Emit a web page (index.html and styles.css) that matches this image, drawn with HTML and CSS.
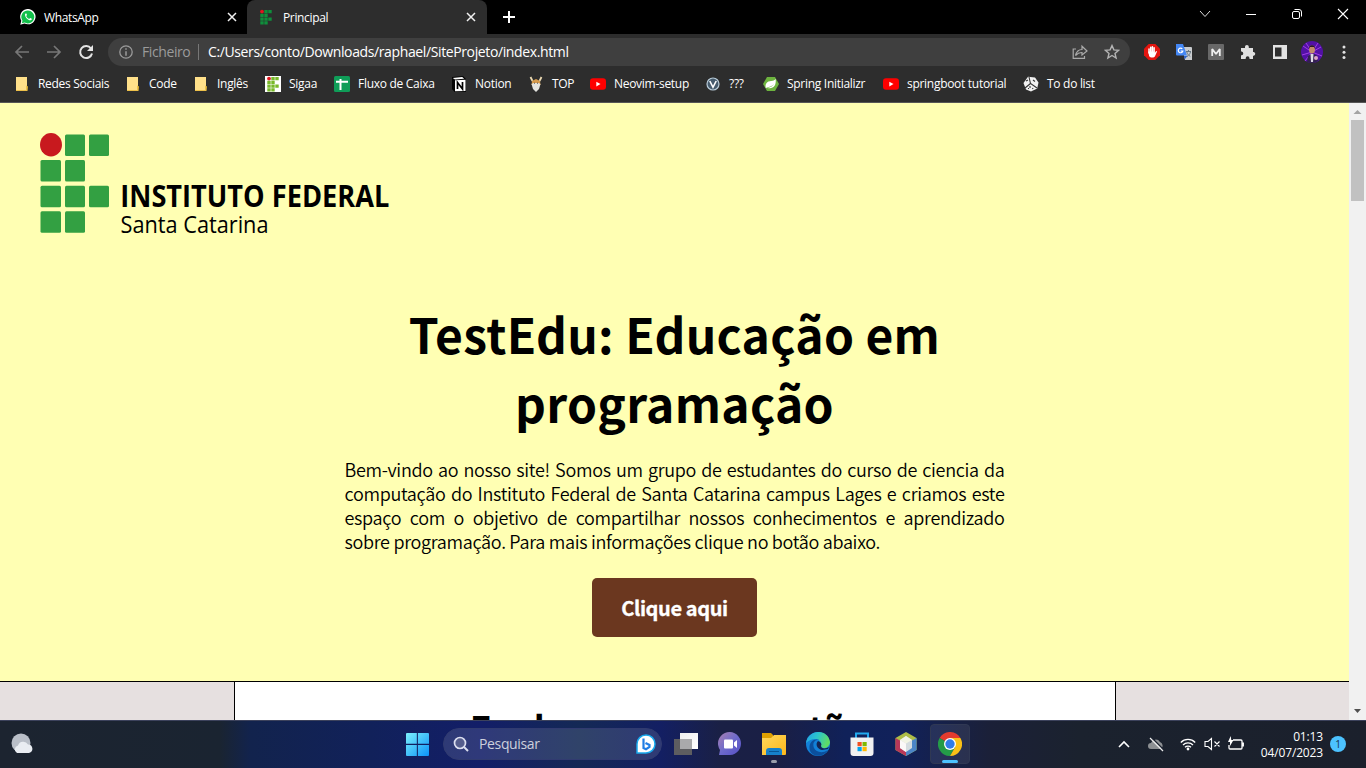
FILE: index.html
```html
<!DOCTYPE html>
<html lang="pt">
<head>
<meta charset="utf-8">
<title>Principal</title>
<link rel="stylesheet" href="styles.css">
</head>
<body>
<svg class="defs" width="0" height="0">
  <symbol id="folder" viewBox="0 0 16 16"><path d="M2 1h11v14H2z" fill="#ffe08a"/><path d="M12.2 9.5V15h1.3l.5-4.500z" fill="#e8b93c"/><path d="M2 14.500h10.500" stroke="#edc04a"/></symbol>
  <symbol id="iflogo" viewBox="0 0 16 16"><circle cx="4" cy="2.600" r="1.900" fill="#e0161e"/><path d="M6.300 1h3.400v3.200H6.300zM10.300 1h3.400v3.200h-3.400zM2.300 4.800h3.400V8H2.300zM6.300 4.800h3.400V8H6.300zM2.300 8.500h3.400v3.200H2.300zM6.300 8.500h3.400v3.200H6.300zM10.300 8.500h3.400v3.200h-3.400zM2.300 12.200h3.400v3.200H2.300zM6.300 12.200h3.400v3.200H6.300z" fill="currentColor"/></symbol>
  <symbol id="youtube" viewBox="0 0 16 16"><rect y="2.300" width="16" height="11.500" rx="3" fill="#f00"/><path d="M6.300 5.700v4.700L10.500 8z" fill="#fff"/></symbol>
  <symbol id="close" viewBox="0 0 10 10"><path d="M1 1l8 8M9 1L1 9" stroke="#f1f1f1" stroke-width="1.500"/></symbol>
</svg>
<div class="screen">
  <header class="browser">
    <div class="tabs">
      <div class="tab">
        <svg class="i16" viewBox="0 0 16 16"><path d="M.3 15.700l1-4A7.700 7.700 0 1 1 4.500 14.600z" fill="#fff"/><path d="M1.800 14.300l.7-2.600A6.500 6.500 0 1 1 4.600 13.600z" fill="#12c04b"/><path d="M5.500 4.500c-2 2 2.500 7.500 5.300 6.800 1.500-.5 1.100-1.400.6-1.700l-1.200-.5-1.100 1C8.300 9.900 6.600 8.300 6.200 7.100l.8-1-.6-1.700z" fill="#fff"/></svg>
        <span class="tab-name">WhatsApp</span>
        <svg class="tab-x"><use href="#close"/></svg>
      </div>
      <div class="tab tab-on">
        <svg class="i16 if-dark"><use href="#iflogo"/></svg>
        <span class="tab-name">Principal</span>
        <svg class="tab-x"><use href="#close"/></svg>
      </div>
      <svg class="plus" viewBox="0 0 12 12"><path d="M6 0v12M0 6h12" stroke="#fff" stroke-width="2"/></svg>
      <div class="win">
        <svg viewBox="0 0 12 12"><path d="M1 3l5 5.500L11 3" fill="none" stroke="#ddd"/></svg>
        <svg viewBox="0 0 12 12"><path d="M1 6.500h10" stroke="#fff"/></svg>
        <svg viewBox="0 0 12 12"><g fill="none" stroke="#fff"><rect x="1.500" y="3.500" width="7" height="7" rx="1.500"/><path d="M3.500 1.500H8a2.500 2.500 0 0 1 2.500 2.500v4.500"/></g></svg>
        <svg viewBox="0 0 12 12"><path d="M1 1l10 10M11 1L1 11" stroke="#fff" stroke-width="1.100"/></svg>
      </div>
    </div>
    <div class="toolbar">
      <svg class="nav" viewBox="0 0 16 16"><path d="M15 8H2M8 2L2 8l6 6" fill="none" stroke="#777" stroke-width="1.700"/></svg>
      <svg class="nav" viewBox="0 0 16 16"><path d="M1 8h13M8 2l6 6-6 6" fill="none" stroke="#777" stroke-width="1.700"/></svg>
      <svg class="nav" viewBox="0 0 16 16"><path d="M13 4.500A6 6 0 1 0 14 9.500" fill="none" stroke="#e4e4e4" stroke-width="2"/><path d="M15 1v6H9z" fill="#e4e4e4"/></svg>
      <div class="omnibox">
        <svg class="info" viewBox="0 0 14 14"><circle cx="7" cy="7" r="6.200" fill="none" stroke="#9b9b9b" stroke-width="1.300"/><path d="M7 3.200v1.600M7 6.200v4.600" stroke="#9b9b9b" stroke-width="1.500"/></svg>
        <span class="scheme">Ficheiro</span><i class="bar"></i><span class="url">C:/Users/conto/Downloads/raphael/SiteProjeto/index.html</span>
        <svg class="i16 share" viewBox="0 0 16 16"><g fill="none" stroke="#aaa" stroke-width="1.200"><path d="M4 5H1.200v9.400h11.300V12M3.500 11.500C4.500 7.500 7 5.500 10 5.500V2.200L15 7l-5 4V8.500C7 8.300 5.500 9.300 3.500 11.500z"/></g></svg>
        <svg class="i16" viewBox="0 0 16 16"><path d="M8 1.600l1.900 4.300 4.700.4-3.600 3.100 1.100 4.600L8 11.500 3.900 14 5 9.400 1.400 6.300l4.700-.4z" fill="none" stroke="#b4b4b4" stroke-width="1.400"/></svg>
      </div>
      <div class="ext">
        <svg viewBox="0 0 16 16"><path d="M4.700 0h6.600L16 4.700v6.600L11.300 16H4.700L0 11.300V4.700z" fill="#e3150f"/><path d="M5 9V5M6.700 8V3.300M8.400 8V2.800M10.100 8V3.800" stroke="#fff" stroke-width="1.500" stroke-linecap="round"/><path d="M4.300 7.500h6.500v1.600l1.300-2.200 1 .5-2 4.600c-.8 1.900-4.800 2.200-6-.1z" fill="#fff"/></svg>
        <svg viewBox="0 0 16 16"><path d="M6 3h9a1 1 0 0 1 1 1v12H9z" fill="#c9cccf"/><path d="M0 0h7l4 11.500H1a1 1 0 0 1-1-1z" fill="#4487f4"/><path d="M8 12h3.500L8.500 15.500z" fill="#2d63c8"/><path d="M6.300 4.900A2.300 2.300 0 1 0 6.800 7H4.700" fill="none" stroke="#fff" stroke-width="1.200"/><path d="M10 7.500h5M12.500 6v1.500M14.500 8c-.5 2-2 3.500-3.500 4.500M10.800 8c.5 2 2 3.500 3.500 4.500" stroke="#667681" fill="none"/></svg>
        <svg viewBox="0 0 16 16"><rect width="16" height="16" rx="1" fill="#686868"/><path d="M4.200 12V5L8 10l3.800-5v7" fill="none" stroke="#eee" stroke-width="1.800" stroke-linejoin="bevel"/></svg>
        <svg viewBox="0 0 16 16"><path d="M1 4h4V2.800a1.900 1.900 0 0 1 3.800 0V4H13v4h.8a1.900 1.900 0 0 1 0 3.700H13V15H9.500v-.8a1.900 1.900 0 0 0-3.800 0v.8H1v-3.700h.8a1.900 1.900 0 0 0 0-3.700H1z" fill="#e0e0e0"/></svg>
        <svg viewBox="0 0 16 16"><path d="M1 1h14v14H1z" fill="#e2e2e2"/><path d="M3 3.500h6.500v9H3z" fill="#2d2d2d"/></svg>
        <svg class="avatar" viewBox="0 0 22 22"><circle cx="11" cy="11" r="11" fill="#5211a5"/><g stroke="#a33de8" stroke-width="1"><path d="M11 11L2 5M11 11L5 2M11 11L17 2M11 11l9-5M11 11l10 4M11 11L1 14M11 11l-7 9"/></g><path d="M6 21l1-6 3-2h3l3 2 1 5-4 2H8z" fill="#332150"/><path d="M9.500 13h3l-.5 8h-2z" fill="#dedbe5"/><ellipse cx="11" cy="8.500" rx="3" ry="4" fill="#c18b6a"/><path d="M8 8c-.5-5 6.500-5 6 0l-1-2H9z" fill="#2a172a"/><circle cx="15" cy="17" r="2" fill="#dda5c8"/></svg>
        <svg viewBox="0 0 16 16"><g fill="#e2e2e2"><circle cx="8" cy="3" r="1.500"/><circle cx="8" cy="8.300" r="1.500"/><circle cx="8" cy="13.500" r="1.500"/></g></svg>
      </div>
    </div>
    <nav class="marks">
      <a><svg><use href="#folder"/></svg><span>Redes Sociais</span></a>
      <a><svg><use href="#folder"/></svg><span>Code</span></a>
      <a><svg><use href="#folder"/></svg><span>Inglês</span></a>
      <a><svg class="if-light"><use href="#iflogo"/></svg><span>Sigaa</span></a>
      <a><svg viewBox="0 0 16 16"><rect width="16" height="16" rx="1.500" fill="#0f9d58"/><path d="M2 5.700h12M6.500 3v11" stroke="#fff" stroke-width="2"/></svg><span>Fluxo de Caixa</span></a>
      <a><svg viewBox="0 0 16 16"><path d="M1 1l11-1 3 3v13H3.500L1 13z" fill="#050505"/><path d="M4 4.300l10.500-.6V15L4 15.300z" fill="#fff"/><path d="M1.700 2l9.500-.9 2 1.600L4 3.400z" fill="#fff"/><path d="M6.500 13V6.500l5 6.500V6" fill="none" stroke="#000" stroke-width="1.700"/></svg><span>Notion</span></a>
      <a><svg viewBox="0 0 16 16"><path d="M2.500 1l2 4M13.500 1l-2 4" stroke="#ead9b2" stroke-width="1.800"/><path d="M4 5l4-2 4 2 .5 4h-9z" fill="#d69b4e"/><path d="M3.500 8l2-1h5l2 1-1.500 5L8 16l-3-3z" fill="#e3e3df"/><path d="M6 7.200h.8M9.200 7.200h.8" stroke="#333"/></svg><span>TOP</span></a>
      <a><svg><use href="#youtube"/></svg><span>Neovim-setup</span></a>
      <a><svg viewBox="0 0 16 16"><circle cx="8" cy="8" r="6" fill="#465b6d" stroke="#b8cbd8" stroke-width="1.200"/><path d="M4.800 5L8 11.300 11.200 5" fill="none" stroke="#fff" stroke-width="1.600"/></svg><span>???</span></a>
      <a><svg viewBox="0 0 16 16"><path d="M4 1h8l4 7-4 7H4L0 8z" fill="#6db33f"/><path d="M2.700 12c-1-6 3-7 7-7.300 1.500-.2 2.300-1 3-1.700.7 6.500-2 10-8 9 3-.8 5-2 6.500-4-2.500 2.300-5 3-8.500 4z" fill="#fff"/></svg><span>Spring Initializr</span></a>
      <a><svg><use href="#youtube"/></svg><span>springboot tutorial</span></a>
      <a><svg viewBox="0 0 16 16"><path d="M5 .8l7 .7 3.500 5-1.300 6L8 15.500l-5-2L.5 7z" fill="#f1f1f1"/><path d="M6 1l1.500 6.500L14 12M7.500 7.500L2 12M5 4l-2 1M10 4l2 1.500M7 10v2M5.500 12v1M10 12l-.5 1" fill="none" stroke="#333" stroke-width="1.100"/></svg><span>To do list</span></a>
    </nav>
  </header>
  <div class="viewport">
    <main class="page">
      <section class="hero">
        <svg class="brand" viewBox="0 0 352 104">
          <g fill="#33a042"><rect x="25" y="1.500" width="20" height="21.500" rx="1.500"/><rect x="49" y="1.500" width="20" height="21.500" rx="1.500"/><rect x="0.500" y="27" width="20.500" height="21.500" rx="1.500"/><rect x="25" y="27" width="20" height="21.500" rx="1.500"/><rect x="0.500" y="52.700" width="20.500" height="21.500" rx="1.500"/><rect x="25" y="52.700" width="20" height="21.500" rx="1.500"/><rect x="49" y="52.700" width="20" height="21.500" rx="1.500"/><rect x="0.500" y="78.300" width="20.500" height="21.500" rx="1.500"/><rect x="25" y="78.300" width="20" height="21.500" rx="1.500"/></g>
          <ellipse cx="11" cy="11.700" rx="11" ry="11.700" fill="#c8191e"/>
          <text class="brand-a" x="80.300" y="74" textLength="269" lengthAdjust="spacingAndGlyphs">INSTITUTO FEDERAL</text>
          <text class="brand-b" x="80.500" y="99.500" textLength="148" lengthAdjust="spacingAndGlyphs">Santa Catarina</text>
        </svg>
        <h1>TestEdu: Educação em programação</h1>
        <p>Bem-vindo ao nosso site! Somos um grupo de estudantes do curso de ciencia da computação do Instituto Federal de Santa Catarina campus Lages e criamos este espaço com o objetivo de compartilhar nossos conhecimentos e aprendizado sobre programação. Para mais informações clique no botão abaixo.</p>
        <button>Clique aqui</button>
      </section>
      <section class="next"><h2>Explore novas questões</h2></section>
    </main>
    <div class="scroll">
      <svg viewBox="0 0 17 17"><path d="M4.500 11L8.500 7l4 4z" fill="#a3a3a3"/></svg>
      <i class="thumb"></i>
      <svg class="down" viewBox="0 0 17 17"><path d="M5 6l3.500 4L12 6z" fill="#505050"/></svg>
    </div>
  </div>
  <footer class="taskbar">
    <svg class="weather" viewBox="0 0 24 24"><circle cx="11" cy="11" r="9.500" fill="#b9bfc8"/><path d="M7 21a4 4 0 0 1 1-7.500 5.500 5.500 0 0 1 10-1A4.300 4.300 0 0 1 19 21z" fill="#e9edf2"/></svg>
    <div class="apps">
      <svg class="start" viewBox="0 0 24 24"><defs><linearGradient id="w" x1="0" y1="0" x2="1" y2="1"><stop stop-color="#7cf0fc"/><stop offset="1" stop-color="#0b93f8"/></linearGradient></defs><path d="M0 1a1 1 0 0 1 1-1h10.300v11.300H0zM12.400 0H23a1 1 0 0 1 1 1v10.300H12.400zM0 12.400h11.300V24H1a1 1 0 0 1-1-1zM12.400 12.400H24V23a1 1 0 0 1-1 1H12.400z" fill="url(#w)"/></svg>
      <div class="search">
        <svg class="i16" viewBox="0 0 16 16"><circle cx="7" cy="7" r="5.500" fill="#555d8d" stroke="#dcdff0" stroke-width="1.700"/><path d="M11 11l4 4" stroke="#dcdff0" stroke-width="2"/></svg>
        <span>Pesquisar</span>
        <svg class="bing" viewBox="0 0 20 20"><path d="M1 19V10a9 9 0 1 1 9 9z" fill="#fff" stroke="#18a9ed" stroke-width="1.500"/><path d="M7.500 4.500v9.500l2.500 1.200 3.500-2.200v-2L9.500 9" fill="none" stroke="#217ee5" stroke-width="2.200"/></svg>
      </div>
      <svg class="app" viewBox="0 0 24 24"><defs><linearGradient id="tv" x2="1" y2="1"><stop stop-color="#eee"/><stop offset="1" stop-color="#fff"/></linearGradient></defs><path d="M6 1h18v16H6z" fill="url(#tv)"/><path d="M0 7h18v16H0z" fill="#5d5d60"/><path d="M6 7h12v10H6z" fill="#a9a9ab"/></svg>
      <svg class="app" viewBox="0 0 24 24"><defs><linearGradient id="ch" x2="1" y2="1"><stop stop-color="#a97faf"/><stop offset=".5" stop-color="#6e6bcb"/><stop offset="1" stop-color="#554fc6"/></linearGradient></defs><path d="M1 23l1-5A11.500 11.500 0 1 1 12 23z" fill="url(#ch)"/><rect x="6" y="7.500" width="9" height="9" rx="1" fill="#fff"/><path d="M16 10.500l3-2.500v8l-3-2.500z" fill="#fff"/></svg>
      <div class="app running"><svg viewBox="0 0 24 24"><defs><linearGradient id="fo" x2="1" y2="1"><stop stop-color="#ffd85c"/><stop offset="1" stop-color="#fdb71a"/></linearGradient></defs><path d="M0 1h9l2 2v4H0z" fill="#dfa000"/><path d="M0 6h9l3-3h12v19a1 1 0 0 1-1 1H0z" fill="url(#fo)"/><path d="M4 23v-4a3 3 0 0 1 3-3h10a3 3 0 0 1 3 3v4z" fill="#1681ca"/><path d="M7 19.500h10" stroke="#075695"/></svg></div>
      <svg class="app" viewBox="0 0 24 24"><defs><linearGradient id="ed" x2="1" y2=".3"><stop stop-color="#229fe8"/><stop offset=".5" stop-color="#2bc4cd"/><stop offset="1" stop-color="#5edc66"/></linearGradient></defs><circle cx="12" cy="12" r="12" fill="#1280d8"/><path d="M0 11C2-3 22-4 24 10c0 6-8 8-9 4 2-7-8-10-15-3z" fill="url(#ed)"/><path d="M14 8c-5-1-8 3-6 8 2 4 8 6 14 2-4 7-15 8-18 1-2-7 2-13 10-11z" fill="#0b4f9d"/><path d="M12 9c-3 3-1 8 4 9l6-1 1-2c-3 2-8 2-8-1 1-2 0-4-3-5z" fill="#142553"/></svg>
      <svg class="app" viewBox="0 0 24 24"><path d="M6 6V1.500h12V6" fill="none" stroke="#22a9ee" stroke-width="2"/><path d="M.5 5.500h23V21a3 3 0 0 1-3 3h-17a3 3 0 0 1-3-3z" fill="#f1f1f1"/><path d="M7.500 10h4.200v4.200H7.500z" fill="#f25022"/><path d="M12.500 10h4.200v4.200h-4.200z" fill="#7fba00"/><path d="M7.500 15h4.200v4.200H7.500z" fill="#00a4ef"/><path d="M12.500 15h4.200v4.200h-4.200z" fill="#ffb900"/></svg>
      <svg class="app" viewBox="0 0 24 24"><path d="M12 0l10.500 6v12L12 24 1.500 18V6z" fill="#aebd47"/><path d="M1.500 6L12 12v12L1.500 18z" fill="#b83759"/><path d="M22.500 6L12 12v12l10.500-6z" fill="#4b86c9"/><path d="M12 4l6 4v8l-6 4-6-4V8z" fill="#d5dce0"/><path d="M12 4l6 4-6 3.500L6 8z" fill="#f2f4e4"/><path d="M12 11.500V20l-6-4V8z" fill="#fbf8f8"/></svg>
      <div class="active-app"><svg viewBox="0 0 24 24"><path d="M12 12L1.600 6A12 12 0 0 1 22.400 6z" fill="#e33b2e"/><path d="M12 24A12 12 0 0 1 1.600 6L12 12l5.200 3z" fill="#249b48"/><path d="M17.200 15L12 24A12 12 0 0 0 22.400 6H12z" fill="#fbc116"/><circle cx="12" cy="12" r="6" fill="#fff"/><circle cx="12" cy="12" r="4.700" fill="#317ce9"/></svg></div>
    </div>
    <div class="tray">
      <svg class="t-up" viewBox="0 0 12 12"><path d="M1 9l5-5 5 5" fill="none" stroke="#fff" stroke-width="1.600"/></svg>
      <svg class="t-cloud" viewBox="0 0 16 16"><path d="M3 13a3 3 0 0 1 0-6 5 5 0 0 1 9-1 4 4 0 0 1 1 7z" fill="#8d9093"/><path d="M3.500 1.500l12 12" stroke="#1c2230" stroke-width="1.200"/><path d="M2 2l13 13" stroke="#eee" stroke-width="1.200"/></svg>
      <svg class="t-wifi" viewBox="0 0 16 16"><g fill="none" stroke="#fff" stroke-width="1.300"><path d="M.8 6.500a10 10 0 0 1 14.400 0M3 9a7 7 0 0 1 10 0M5 11.300a4.200 4.200 0 0 1 6 0"/></g><circle cx="8" cy="13" r="1.400" fill="#fff"/></svg>
      <svg class="t-vol" viewBox="0 0 16 16"><path d="M1 5.500h3l3.500-3v11l-3.500-3H1zM10.500 5.500l5 5M15.500 5.500l-5 5" fill="none" stroke="#fff" stroke-width="1.100"/></svg>
      <svg class="t-bat" viewBox="0 0 16 16"><path d="M5 4h8a1 1 0 0 1 1 1v7a1 1 0 0 1-1 1H2a1 1 0 0 1-1-1V9M15.300 6.500v4" fill="none" stroke="#fff" stroke-width="1.300"/><path d="M2.700 0L0 6h2v4l3.500-6H3.300z" fill="#fff"/></svg>
      <div class="clock"><span>01:13</span><span>04/07/2023</span></div>
      <b class="badge">1</b>
    </div>
  </footer>
</div>
</body>
</html>
```
FILE: styles.css
```css
* { box-sizing: border-box; }
body { margin: 0; overflow: hidden; font-family: "Open Sans", "Noto Sans", sans-serif; }
svg { display: block; flex: none; }
.defs { position: absolute; }
.i16 { width: 16px; height: 16px; }
.screen { width: 1366px; height: 768px; display: flex; flex-direction: column; overflow: hidden; }

.browser { height: 103px; background: #2d2d2d; border-bottom: 1px solid #565656; color: #fff; flex: none; }
.tabs { height: 34px; background: #000; display: flex; align-items: center; }
.tab { width: 247px; height: 34px; padding: 0 10px 0 20px; display: flex; align-items: center; gap: 8px; font-size: 12px; }
.tab-on { width: 240px; padding: 0 11px 0 11px; background: #2d2d2d; border-radius: 8px 8px 0 0; }
.tab-on .tab-name { padding-left: 1px; }
.tab-name { flex: 1; letter-spacing: -0.35px; }
.tab-x { width: 10px; height: 10px; }
.if-dark { color: #0f8f3c; }
.plus { width: 12px; height: 12px; margin-left: 16px; }
.win { margin-left: auto; padding-bottom: 6px; padding-right: 17px; display: flex; gap: 34px; }
.win svg { width: 12px; height: 12px; }

.toolbar { height: 36px; display: flex; align-items: center; padding-left: 14px; }
.nav { width: 16px; height: 16px; margin-right: 16px; }
.omnibox { width: 1022px; height: 28px; margin-left: -2px; border-radius: 14px; background: #3f3f3f; display: flex; align-items: center; padding: 0 10px 0 11px; font-size: 14px; }
.info { width: 14px; height: 14px; margin-right: 9px; }
.scheme { width: 56px; color: #9b9b9b; letter-spacing: -0.4px; padding-bottom: 1px; }
.bar { width: 1px; height: 16px; background: #777; margin-right: 9px; }
.url { flex: 1; letter-spacing: -0.38px; white-space: nowrap; padding-bottom: 1px; }
.share { margin-right: 16px; }
.ext { display: flex; align-items: center; gap: 16px; margin-left: 14px; }
.ext svg { width: 16px; height: 16px; }
.ext .avatar { width: 22px; height: 22px; margin: 0 -3px; }

.marks { height: 28px; padding-left: 14px; display: grid; align-items: center; font-size: 12px; letter-spacing: -0.29px; white-space: nowrap;
  grid-template-columns: 111px 68px 72px 69px 117px 77px 62px 115px 58px 120px 140px 100px; }
.marks a { display: flex; align-items: center; gap: 8px; }
.marks svg { width: 16px; height: 16px; }
.marks span { padding-bottom: 1px; }
.marks .if-light { background: #fff; color: #78b82a; }

.viewport { flex: 1; min-height: 0; display: flex; overflow: hidden; }
.page { flex: 1; background: #e6e0e0; font-family: "Noto Sans CJK JP", sans-serif; color: #000; overflow: hidden; }
.hero { height: 579px; background: #ffffb3; border-bottom: 1px solid #000; padding-top: 30px; display: flex; flex-direction: column; align-items: center; }
.brand { width: 352px; height: 104px; align-self: flex-start; margin-left: 40px; overflow: visible; }
.brand text { font-family: "Open Sans", sans-serif; }
.brand-a { font-size: 30.500px; font-weight: 700; }
.brand-b { font-size: 23px; }
h1 { width: 660px; margin: 62px 0 0; font-size: 48px; line-height: 69px; letter-spacing: 0.3px; text-align: center; font-weight: 700; }
.hero p { width: 660px; margin: 20px 0 0; font-size: 18px; line-height: 24px; font-weight: 350; letter-spacing: -0.31px; text-align: justify; }
button { width: 165px; height: 59px; margin-top: 25px; border: 0; border-radius: 5px; background: #6b371f; color: #fff; font: 700 20px "Noto Sans CJK JP", sans-serif; letter-spacing: -0.4px; -webkit-text-stroke: 0.3px #fff; }
.next { width: 882px; height: 200px; margin: 0 auto; background: #fff; border: 1px solid #000; border-top: 0; padding: 19px 0 0 5px; text-align: center; }
h2 { margin: 0; font-size: 36px; line-height: 52px; }
.scroll { width: 17px; background: #f1f1f1; display: flex; flex-direction: column; align-items: center; }
.scroll svg { width: 17px; height: 17px; }
.thumb { width: 13px; height: 81px; background: #c1c1c1; }
.scroll .down { margin-top: auto; }

.taskbar { height: 48px; flex: none; border-top: 1px solid #3c425c; padding-bottom: 1px; display: flex; align-items: center; color: #fff;
  background: linear-gradient(90deg, #1c2430 0, #1a2431 220px, #12234d 250px, #11215a 370px, #131e68 480px, #142955 580px, #131f63 660px, #1a2045 720px, #1a1f45 780px, #102159 845px, #11215a 900px, #1b2038 990px, #1b222e 1080px, #1b202c 100%); }
.weather { width: 24px; height: 24px; margin-left: 10px; }
.apps { display: flex; align-items: center; margin-left: 372px; }
.start { width: 23px; height: 23px; }
.search { width: 219px; height: 32px; margin: 0 12px 0 14px; border-radius: 16px; border: 1px solid #313b70; background: rgba(255,255,255,.12); display: flex; align-items: center; padding: 0 5px 0 9px; font-size: 14px; line-height: 20px; color: #cdd0dd; }
.search span { flex: 1; margin-left: 10px; letter-spacing: -0.35px; }
.bing { width: 20px; height: 20px; }
.app { width: 24px; height: 24px; margin-right: 20px; flex: none; }
.running { display: flex; flex-direction: column; align-items: center; overflow: visible; }
.running svg { width: 24px; height: 24px; }
.running::after { content: ""; flex: none; width: 6px; height: 3px; margin-top: 4px; border-radius: 2px; background: #9a9eab; }
.active-app { width: 40px; height: 40px; margin-left: -8px; border: 1px solid #303853; border-radius: 4px; background: rgba(255,255,255,.08); display: flex; flex-direction: column; align-items: center; padding-top: 7px; }
.active-app svg { width: 24px; height: 24px; }
.active-app::after { content: ""; width: 16px; height: 3px; margin-top: 4px; border-radius: 2px; background: #4cc2ff; }
.tray { margin-left: auto; display: flex; align-items: center; padding-right: 20px; }
.t-up { width: 12px; height: 12px; margin-right: 18px; }
.t-cloud, .t-wifi, .t-vol, .t-bat { width: 16px; height: 16px; }
.t-cloud { margin-right: 16px; }
.t-wifi, .t-vol { margin-right: 8px; }
.clock { width: 79px; padding-top: 2px; display: flex; flex-direction: column; align-items: flex-end; font-size: 12px; line-height: 16px; letter-spacing: -0.15px; white-space: nowrap; }
.badge { width: 16px; height: 16px; margin-left: 7px; border-radius: 50%; background: #4cc2ff; color: #17324a; font-size: 10px; line-height: 16px; font-weight: 400; text-align: center; }
```
